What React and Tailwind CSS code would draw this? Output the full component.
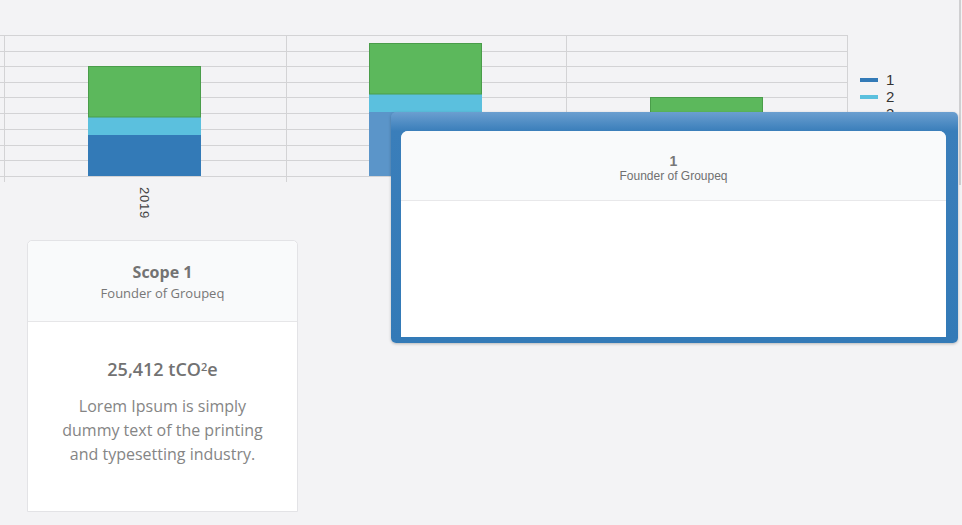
import React from 'react';

const gridRows = [35, 51, 66, 82, 97, 113, 129, 145, 160, 176];
const gridCols = [4, 286, 566, 847];

const bars = [
  { x: 88, green: [66, 117], cyan: [117, 135], blue: [135, 176], blueColor: '#337ab7' },
  { x: 369, green: [43, 94], cyan: [94, 112], blue: [112, 176], blueColor: '#5b95c9' },
  { x: 650, green: [97, 140], cyan: [140, 155], blue: [155, 176], blueColor: '#337ab7' },
];

const legend = [
  { label: '1', color: '#337ab7', y: 80 },
  { label: '2', color: '#5bc0de', y: 97 },
  { label: '3', color: '#5cb85c', y: 114 },
];

function Chart() {
  return (
    <svg width="962" height="230" className="block">
      {gridRows.map((y) => (
        <line key={y} x1="0" x2="847" y1={y + 0.5} y2={y + 0.5} stroke="#d3d3d5" strokeWidth="1" />
      ))}
      {gridCols.map((x) => (
        <line key={x} x1={x + 0.5} x2={x + 0.5} y1="35" y2="182" stroke="#d3d3d5" strokeWidth="1" />
      ))}
      {bars.map((b) => (
        <g key={b.x}>
          <rect x={b.x} y={b.blue[0]} width="113" height={b.blue[1] - b.blue[0]} fill={b.blueColor} />
          <rect x={b.x} y={b.cyan[0]} width="113" height={b.cyan[1] - b.cyan[0]} fill="#5bc0de" />
          <rect
            x={b.x + 0.5}
            y={b.green[0] + 0.5}
            width="112"
            height={b.green[1] - b.green[0] - 0.5}
            fill="#5cb85c"
            stroke="#4a9d4a"
            strokeWidth="1"
          />
        </g>
      ))}
      <text
        transform="translate(139.5,187) rotate(90)"
        fontFamily="'Liberation Sans', Arial, sans-serif"
        fontSize="13"
        fill="#444"
        letterSpacing="0.8"
      >
        2019
      </text>
      {legend.map((l) => (
        <g key={l.label}>
          <rect x="860" y={l.y - 2} width="18" height="4" fill={l.color} />
          <text
            x="886"
            y={l.y + 5}
            fontFamily="'Liberation Sans', Arial, sans-serif"
            fontSize="15"
            fill="#333"
          >
            {l.label}
          </text>
        </g>
      ))}
      <rect x="959" y="0" width="2" height="185" fill="#cfcfd1" />
    </svg>
  );
}

function ScopeCard() {
  return (
    <div className="ml-[27px] mt-[10px] w-[271px] h-[272px] rounded-t-[5px] border border-[#e3e3e6] bg-white font-['Open_Sans',sans-serif] text-center">
      <div className="h-[81px] rounded-t-[5px] border-b border-[#e6e6e8] bg-[#f9fafb] pt-[20px]">
        <div className="text-[16px] font-bold leading-[22px] text-[#737373]">Scope 1</div>
        <div className="mt-[1px] text-[13px] leading-[18px] text-[#777]">Founder of Groupeq</div>
      </div>
      <div className="px-[30px] pt-[35px]">
        <div className="text-[18px] font-semibold leading-[24px] text-[#727272]">
          25,412 tCO<sup className="text-[11px]">2</sup>e
        </div>
        <p className="mt-[13px] text-[16px] leading-[24px] text-[#858585]">
          Lorem Ipsum is simply dummy text of the printing and typesetting industry.
        </p>
      </div>
    </div>
  );
}

function Dialog() {
  return (
    <div className="absolute left-[391px] top-[112px] h-[231px] w-[567px] rounded-[5px] bg-[linear-gradient(to_bottom,#6b9fd0,#3a7eba_19px,#337ab7)] pt-[19px] pl-[10px] pr-[12px] pb-[6px] shadow-[0_1px_3px_rgba(0,0,0,0.25)]">
      <div className="h-full rounded-t-[7px] bg-white font-['Liberation_Sans',Arial,sans-serif] text-center">
        <div className="h-[70px] rounded-t-[7px] border-b border-[#e8e8ea] bg-[#f9fafb] pt-[23px]">
          <div className="text-[14px] font-bold leading-[15px] text-[#777]">1</div>
          <div className="text-[12px] leading-[14px] text-[#707070]">Founder of Groupeq</div>
        </div>
      </div>
    </div>
  );
}

export default function App() {
  return (
    <div className="relative h-[525px] w-[962px] overflow-hidden bg-[#f3f3f5]">
      <Chart />
      <ScopeCard />
      <Dialog />
    </div>
  );
}
